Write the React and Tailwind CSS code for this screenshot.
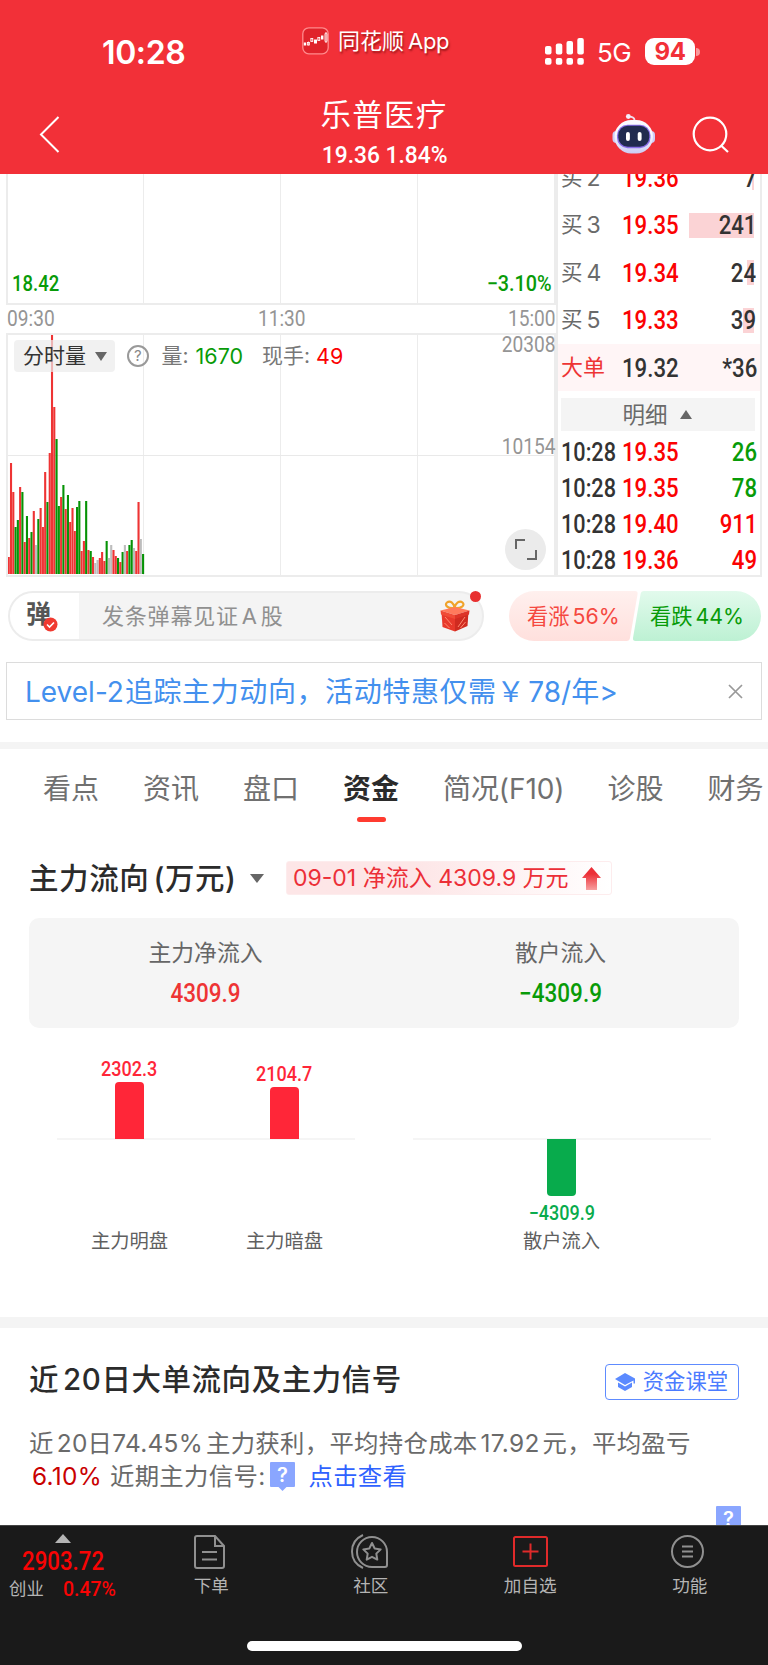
const SANS = "font-['Inter','Noto_Sans_CJK_SC',sans-serif]";
const NUM = "font-['Roboto','Noto_Sans_CJK_SC',sans-serif]";

// [height, direction] for each minute, r = up, g = down, n = flat
const volumes = [
  [17, "r"], [111, "r"], [82, "r"], [47, "g"], [54, "g"], [87, "r"], [82, "g"], [32, "r"], [58, "g"], [36, "r"],
  [42, "g"], [63, "r"], [29, "n"], [55, "g"], [66, "r"], [47, "r"], [102, "r"], [72, "g"], [121, "r"], [239, "r"],
  [167, "r"], [135, "g"], [68, "g"], [77, "r"], [89, "g"], [65, "r"], [79, "g"], [52, "r"], [66, "r"], [43, "r"],
  [67, "g"], [73, "g"], [23, "r"], [33, "r"], [73, "g"], [24, "r"], [23, "g"], [17, "r"], [11, "n"], [14, "n"],
  [16, "r"], [22, "r"], [13, "r"], [33, "g"], [16, "n"], [29, "n"], [24, "r"], [18, "r"], [16, "g"], [12, "r"],
  [22, "g"], [29, "n"], [23, "r"], [29, "g"], [34, "g"], [26, "n"], [23, "r"], [72, "r"], [35, "n"], [20, "g"],
];

const barColors = { r: "#ee3434", g: "#069306", n: "#bdbdbd" };

const bids = [
  { label: "买2", price: "19.36", qty: "7", width: 2 },
  { label: "买3", price: "19.35", qty: "241", width: 65 },
  { label: "买4", price: "19.34", qty: "24", width: 7 },
  { label: "买5", price: "19.33", qty: "39", width: 11 },
];

const ticks = [
  { price: "19.35", qty: "26", up: false },
  { price: "19.35", qty: "78", up: false },
  { price: "19.40", qty: "911", up: true },
  { price: "19.36", qty: "49", up: true },
];

const tabs = ["看点", "资讯", "盘口", "资金", "简况(F10)", "诊股", "财务"];

function StatusBar() {
  return (
    <div className="relative flex h-[76px] items-start justify-between pr-[68px] pl-[102px]">
      <div className="mt-[33px] text-[32px] leading-[39px] font-semibold tracking-[-0.4px]">10:28</div>
      <div className="absolute top-[25px] left-[302px] flex items-center gap-[9px]">
        <svg width="27" height="28" viewBox="0 0 27 28" fill="none">
          <rect x="0.8" y="0.8" width="25.4" height="26" rx="6" fill="#e0232b" stroke="#ff8a8c" strokeWidth="1.3" />
          <path d="M6.500 14.500v4M10 11v4M17 10v4M24 5v11" stroke="#ffb0b0" strokeWidth="1" />
          <rect x="1.800" y="15.500" width="2.400" height="3" fill="#fff" />
          <rect x="5.500" y="15.500" width="2" height="2.500" stroke="#fff" strokeWidth="0.800" />
          <rect x="8.800" y="11.500" width="2" height="3" stroke="#fff" strokeWidth="0.800" />
          <rect x="12" y="12.500" width="3" height="4" fill="#fff" />
          <rect x="15.800" y="10.500" width="2" height="3" stroke="#fff" strokeWidth="0.800" />
          <rect x="19" y="8.500" width="2.400" height="4" fill="#fff" />
          <rect x="23" y="6" width="2" height="9" rx="1" stroke="#fff" strokeWidth="0.900" />
        </svg>
        <span className="text-[22px] leading-8 whitespace-nowrap [text-shadow:1px_2px_2px_rgba(90,0,0,0.55)]">
          同花顺<span className="ml-1 tracking-[-0.3px]">App</span>
        </span>
      </div>
      <div className="mt-[38px] flex items-start">
        <svg width="40" height="27" viewBox="0 0 40 27" fill="#fff">
          <rect x="0" y="8" width="6.500" height="8.500" rx="2" />
          <rect x="10.800" y="5.500" width="6.500" height="11" rx="2" />
          <rect x="21.500" y="3" width="6.500" height="13.500" rx="2" />
          <rect x="32.300" y="0" width="6.500" height="16.500" rx="2" />
          <rect x="0" y="20" width="6.500" height="6.800" rx="2" />
          <rect x="10.800" y="20" width="6.500" height="6.800" rx="2" />
          <rect x="21.500" y="20" width="6.500" height="6.800" rx="2" />
          <rect x="32.300" y="20" width="6.500" height="6.800" rx="2" />
        </svg>
        <span className="ml-3 text-[26px] leading-[30px] tracking-[-0.6px]">5G</span>
        <div className="ml-[14px] flex h-[27px] w-[50px] items-center justify-center rounded-[9px] bg-white text-[24px] font-bold tracking-[-0.5px] text-[#f23038]">
          94
        </div>
        <div className="mt-[10px] ml-px h-2 w-1 rounded-r-full bg-white/50" />
      </div>
    </div>
  );
}

function Robot() {
  return (
    <svg width="44" height="42" viewBox="0 0 44 42" fill="none">
      <defs>
        <linearGradient id="shell" x1="0" y1="0" x2="0" y2="1">
          <stop offset="0.4" stopColor="#fafaff" />
          <stop offset="1" stopColor="#cbccf4" />
        </linearGradient>
      </defs>
      <path d="M23.500 8V6Q23.500 3 18 2.500" stroke="#f0dcec" strokeWidth="1.800" />
      <circle cx="17.300" cy="2.500" r="2.400" fill="#f4eefc" />
      <rect x="1.500" y="17" width="8" height="12" rx="4" fill="#cfcdf8" />
      <rect x="36" y="17" width="8" height="12" rx="4" fill="#cfcdf8" />
      <rect x="3.500" y="6" width="38.500" height="33.500" rx="16.700" fill="url(#shell)" />
      <rect x="6" y="10.700" width="33.500" height="23.500" rx="10.500" fill="#8a6ee8" />
      <rect x="7.300" y="11.700" width="31" height="21" rx="9.500" fill="#212b4f" />
      <rect x="15" y="18" width="3.900" height="9" rx="1.950" fill="#fff" />
      <rect x="26.700" y="18" width="3.900" height="9" rx="1.950" fill="#fff" />
    </svg>
  );
}

function Header() {
  return (
    <header className="h-[174px] bg-[#f23038] text-white">
      <StatusBar />
      <div className="grid h-[98px] grid-cols-3">
        <div className="pt-[40px] pl-[39px]">
          <svg width="21" height="37" viewBox="0 0 21 37" fill="none" stroke="#fff" strokeWidth="2">
            <path d="M19.500 1L2 18.500 19.500 36" />
          </svg>
        </div>
        <div className="flex flex-col items-center pt-[19px]">
          <div className="text-[30.5px] leading-[40px] tracking-[1.3px]">乐普医疗</div>
          <div className={`${NUM} ml-px scale-x-[0.93] pt-px text-[24.5px] leading-[38px] font-medium whitespace-nowrap`}>
            19.36 1.84%
          </div>
        </div>
        <div className="flex items-start justify-end gap-[37px] pt-[38px] pr-[39px]">
          <Robot />
          <svg className="mt-[2px]" width="37" height="38" viewBox="0 0 37 38" fill="none" stroke="#fff" strokeWidth="2.200">
            <circle cx="18" cy="18" r="16.300" />
            <path d="M29 29.500l7 6.500" />
          </svg>
        </div>
      </div>
    </header>
  );
}

function TimeChart() {
  return (
    <div className="relative ml-[6px] w-[550px]">
      <div className={`relative flex h-[131px] items-end justify-between border-x-2 border-b-2 border-[#ececec] pr-[2px] pb-[3px] pl-[4px] text-[21.5px] font-medium text-[#089b08] ${NUM}`}>
        <span className="origin-left scale-x-[0.86]">18.42</span>
        <span className="origin-right scale-x-[0.92]">−3.10%</span>
        <div className="absolute inset-y-0 left-[135px] w-[138px] border-x border-[#ececec]" />
        <div className="absolute inset-y-0 left-[409px] border-l border-[#ececec]" />
      </div>
      <div className={`flex h-[28px] items-center justify-between pl-px text-[21.5px] text-[#959595] ${NUM}`}>
        <span className="origin-left scale-x-[0.89]">09:30</span>
        <span className="scale-x-[0.89]">11:30</span>
        <span className="origin-right scale-x-[0.89]">15:00</span>
      </div>
      <div className="relative h-[244px] border-2 border-[#ececec]">
        <div className="absolute inset-y-0 left-[135px] w-[138px] border-x border-[#ececec]" />
        <div className="absolute inset-y-0 left-[409px] border-l border-[#ececec]" />
        <div className="absolute inset-x-0 top-[120px] border-t border-[#e9e9e9]" />
        <svg className="absolute top-0 left-0" width="137" height="239" viewBox="0 0 137 239">
          {volumes.map(([h, dir], i) => (
            <rect key={i} x={-0.3 + i * 2.277} y={239 - h} width="2.1" height={h} fill={barColors[dir]} />
          ))}
        </svg>
        <div className="relative flex items-center pt-[5px] pl-[6px] text-[21px]">
          <div className="flex h-8 w-[101px] items-center justify-between rounded bg-[#ebebeb]/70 pr-2 pl-[9px] text-[#333]">
            <span className="whitespace-nowrap">分时量</span>
            <svg width="12" height="9" viewBox="0 0 12 9" fill="#666">
              <path d="M0 0h12L6 9z" />
            </svg>
          </div>
          <div className="ml-[12px] flex size-[21.5px] items-center justify-center rounded-full border-2 border-[#999] text-[15px] text-[#888]">
            ?
          </div>
          <span className="ml-[13px] text-[#777]">量:</span>
          <span className="ml-[7px] text-[21.5px] text-[#089b08]">1670</span>
          <span className="ml-[19px] text-[#777]">现手:</span>
          <span className="ml-[6px] text-[21.5px] text-[#fb0202]">49</span>
        </div>
        <div className={`absolute top-[-2px] right-[-1px] origin-right scale-x-[0.89] text-[21.5px] leading-[24px] text-[#959595] ${NUM}`}>20308</div>
        <div className={`absolute top-[100px] right-[-1px] origin-right scale-x-[0.89] text-[21.5px] leading-[24px] text-[#959595] ${NUM}`}>10154</div>
        <div className="absolute right-[8px] bottom-[5px] flex size-[41px] items-center justify-center rounded-full bg-[#ebebeb]">
          <svg width="22" height="21" viewBox="0 0 22 21" fill="none" stroke="#666" strokeWidth="2">
            <path d="M1 10V1h9M21 11v9h-9" />
          </svg>
        </div>
      </div>
    </div>
  );
}

function OrderBook() {
  return (
    <div className={`w-[206px] border-x-2 border-b-2 border-[#ececec] text-[25.5px] font-medium ${NUM}`}>
      <div className="mt-[-20px]">
        {bids.map((b) => (
          <div key={b.label} className="flex h-[47.6px] items-center pr-[6px] pl-[3px]">
            <span className={`flex w-[61px] gap-1 text-[21.5px] font-normal text-[#6a6a6a] ${SANS}`}>
              {b.label[0]}
              <span className="text-[23px]">{b.label[1]}</span>
            </span>
            <span className="origin-left scale-x-[0.87] text-[#fb0202]">{b.price}</span>
            <span className="relative ml-auto flex h-[25px] items-center justify-end text-[#333]">
              <i className="absolute inset-y-0 right-0 bg-[#fbd3d5]" style={{ width: b.width }} />
              <span className="relative left-[2px] origin-right scale-x-[0.87]">{b.qty}</span>
            </span>
          </div>
        ))}
      </div>
      <div className="flex h-[47px] items-center bg-[#fff5f6] px-[3px] text-[#333]">
        <span className={`w-[61px] text-[22px] font-normal text-[#ee3434] ${SANS}`}>大单</span>
        <span className="origin-left scale-x-[0.87]">19.32</span>
        <span className="ml-auto origin-right scale-x-[0.87]">*36</span>
      </div>
      <div className={`mt-[7px] mr-[5px] ml-[3px] flex h-[33px] items-center justify-center gap-[12px] bg-[#f4f4f4] pr-[2px] text-[22.5px] font-normal text-[#6a6a6a] ${SANS}`}>
        明细
        <svg width="12" height="9" viewBox="0 0 12 9" fill="#666">
          <path d="M0 9h12L6 0z" />
        </svg>
      </div>
      <div className="mt-[3px]">
        {ticks.map((t, i) => (
          <div key={i} className="flex h-[35.8px] items-center px-[3px]">
            <span className="w-[61px] origin-left scale-x-[0.85] text-[#333]">10:28</span>
            <span className="origin-left scale-x-[0.87] text-[#fb0202]">{t.price}</span>
            <span className={`ml-auto origin-right scale-x-[0.87] ${t.up ? "text-[#fb0202]" : "text-[#089b08]"}`}>{t.qty}</span>
          </div>
        ))}
      </div>
    </div>
  );
}

function Gift() {
  return (
    <svg width="30" height="32" viewBox="0 0 30 32" fill="none">
      <path d="M14.500 8C8 9 4 5 7 2.500S14 3 14.500 8c1-5 5-8 8-5.500S21 9 14.500 8z" stroke="#f0a32a" strokeWidth="2.200" />
      <path d="M1.500 12l13.500 5v14.500L2.500 27z" fill="#e8392b" />
      <path d="M28.500 12L15 17v14.500L27.500 26z" fill="#d02b20" />
      <path d="M0.500 10.500L15 7l14.500 3.500L15 15z" fill="#ff7a5c" />
      <path d="M0.500 10.500L15 15v4L1 14.500z" fill="#f04b36" />
      <path d="M29.500 10.500L15 15v4l14-4.500z" fill="#dd3427" />
      <path d="M5 17l7 8M4.500 23l5 5M18 27l7-10M20.500 28l5-6" stroke="#ff8a70" strokeWidth="1" />
    </svg>
  );
}

function BarrageRow() {
  return (
    <div className="mt-[14px] flex h-[50px] items-center pr-[7px] pl-2">
      <div className="relative flex h-[50px] w-[476px] items-center rounded-full border-2 border-[#ececec] bg-[#f4f4f4]">
        <div className="flex h-full w-[69px] items-center rounded-l-full bg-white pb-[2px] pl-[16px] text-[25px] font-bold text-[#555]">
          弹
        </div>
        <svg className="absolute top-[24px] left-[33px]" width="15" height="15" viewBox="0 0 15 15" fill="none">
          <circle cx="7.500" cy="7.500" r="7" fill="#f03a30" />
          <path d="M4 7.500l2.500 2.500L11 5.500" stroke="#fff" strokeWidth="1.600" />
        </svg>
        <span className="ml-[23px] pt-px text-[22px] tracking-[0.8px] text-[#909090]">
          发条弹幕见证<span className="mx-[3px]">A</span>股
        </span>
        <div className="mr-[12px] ml-auto">
          <Gift />
        </div>
        <i className="absolute top-[-2px] right-[1px] size-[11px] rounded-full bg-[#e83030]" />
      </div>
      <div className="relative ml-[25px] flex h-[50px] w-[252px] items-center pt-[2px] text-[21.3px]">
        <svg className="absolute inset-0" width="252" height="50" viewBox="0 0 252 50">
          <defs>
            <linearGradient id="up" x1="0" y1="0" x2="0" y2="1">
              <stop offset="0" stopColor="#fff0ee" />
              <stop offset="1" stopColor="#ffe0dd" />
            </linearGradient>
            <linearGradient id="down" x1="0" y1="0" x2="0" y2="1">
              <stop offset="0" stopColor="#e2faec" />
              <stop offset="1" stopColor="#bdf1d3" />
            </linearGradient>
          </defs>
          <path d="M25 0H126q3 0 2.600 3L121 47q-.5 3-3.500 3H25A25 25 0 0 1 25 0z" fill="url(#up)" />
          <path d="M227 0H135q-3 0-3.400 3L124 47q-.4 3 2.600 3H227A25 25 0 0 0 227 0z" fill="url(#down)" />
        </svg>
        <span className="relative ml-[18px] w-[123px] text-[#f5483f]">
          看涨<span className="ml-[3px]">56%</span>
        </span>
        <span className="relative text-[#089b08]">
          看跌<span className="ml-[3px]">44%</span>
        </span>
      </div>
    </div>
  );
}

function Banner() {
  return (
    <div className="mx-[6px] mt-[21px] flex h-[58px] items-center justify-between border border-[#dcdcdc] pr-[18px] pl-[18px] text-[28px] text-[#4390ee]">
      <span className="pt-px whitespace-nowrap">
        Level-2<span className="ml-px tracking-[0.6px]">追踪主力动向，活动特惠仅需￥</span>
        <span className="ml-[3px]">78/年&gt;</span>
      </span>
      <svg width="15" height="15" viewBox="0 0 15 15" stroke="#999" strokeWidth="1.700">
        <path d="M1 1l13 13M14 1L1 14" />
      </svg>
    </div>
  );
}

function Tabs() {
  return (
    <div className="flex h-[82px] gap-[44px] overflow-hidden pl-[43px] text-[28px] text-[#707070]">
      {tabs.map((t) => (
        <div key={t} className={`flex shrink-0 flex-col items-center pt-[19px] ${t === "资金" ? "font-semibold text-[#2b2b2b]" : ""}`}>
          <span className={`leading-[42px] whitespace-nowrap ${t.length > 2 ? "mr-[-1px] tracking-[-0.1px]" : ""}`}>{t}</span>
          {t === "资金" && <i className="mt-[7px] h-[5px] w-[29px] rounded-full bg-[#ff3b30]" />}
        </div>
      ))}
    </div>
  );
}

function FlowBar({ value, label, height, down }) {
  const color = down ? "text-[#08ab4c]" : "text-[#ff2638]";
  return (
    <div className="flex w-[155px] flex-col items-center">
      <div className="flex h-[81px] flex-col items-center justify-end">
        {!down && <span className={`${NUM} scale-x-90 text-[20px] leading-[25px] font-medium ${color}`}>{value}</span>}
        {!down && <i className="w-[29px] shrink-0 rounded-t bg-[#ff2638]" style={{ height }} />}
      </div>
      <div className="flex h-[90px] flex-col items-center">
        {down && <i className="w-[29px] shrink-0 rounded-b bg-[#08ab4c]" style={{ height }} />}
        {down && <span className={`${NUM} mt-1 scale-x-90 text-[20px] leading-[26px] font-medium ${color}`}>{value}</span>}
      </div>
      <span className="text-[19.3px] leading-[24px] text-[#606060]">{label}</span>
    </div>
  );
}

function MainFlow() {
  return (
    <section className="h-[486px] pt-[30px]">
      <div className="flex h-[34px] items-center pl-[29px]">
        <h2 className="w-[207px] text-[29.5px] font-medium tracking-[0.6px] whitespace-nowrap text-[#2b2b2b]">
          主力流向<span className="ml-[4px]">(万元)</span>
        </h2>
        <svg className="ml-[14px]" width="14" height="9" viewBox="0 0 14 9" fill="#666">
          <path d="M0 0h14L7 9z" />
        </svg>
        <div className="ml-[22px] flex h-[34px] w-[326px] items-center justify-between rounded-[3px] border border-[#fdeced] bg-linear-to-r from-[#fde6e7] from-40% to-white pr-[10px] pl-[6px] text-[23px] text-[#ec2f37]">
          <span className="whitespace-nowrap">09-01 净流入 4309.9 万元</span>
          <svg width="19" height="23" viewBox="0 0 19 23">
            <defs>
              <linearGradient id="arrow" x1="0" y1="0" x2="0" y2="1">
                <stop offset="0.3" stopColor="#ec2f37" />
                <stop offset="1" stopColor="#f7a0a0" />
              </linearGradient>
            </defs>
            <path d="M9.500 0L19 11h-4v12H4V11H0z" fill="url(#arrow)" />
          </svg>
        </div>
      </div>
      <div className="mx-[29px] mt-[23px] flex h-[110px] rounded-[10px] bg-[#f5f5f5] text-center">
        <div className="w-[353px] pt-[19px]">
          <div className="text-[22.8px] leading-[32px] text-[#666]">主力净流入</div>
          <div className={`mt-[8px] scale-x-90 text-[25px] leading-[34px] font-medium text-[#ee3434] ${NUM}`}>4309.9</div>
        </div>
        <div className="w-[357px] pt-[19px]">
          <div className="text-[22.8px] leading-[32px] text-[#666]">散户流入</div>
          <div className={`mt-[8px] scale-x-90 text-[25px] leading-[34px] font-medium text-[#089b08] ${NUM}`}>−4309.9</div>
        </div>
      </div>
      <div className="mt-[30px] flex justify-between px-[57px]">
        <div className="relative flex w-[298px]">
          <i className="absolute inset-x-0 top-[80px] h-[2px] bg-[#f5f5f5]" />
          <div className="relative -ml-[5px] flex">
            <FlowBar value="2302.3" label="主力明盘" height={57.5} />
            <FlowBar value="2104.7" label="主力暗盘" height={52.5} />
          </div>
        </div>
        <div className="relative flex w-[298px] justify-center">
          <i className="absolute inset-x-0 top-[80px] h-[2px] bg-[#f5f5f5]" />
          <div className="relative mr-px">
            <FlowBar value="−4309.9" label="散户流入" height={57} down />
          </div>
        </div>
      </div>
    </section>
  );
}

function HelpChip({ className }) {
  return (
    <svg className={className} width="25" height="29" viewBox="0 0 25 29">
      <path d="M1 0h23q1 0 1 1v23q0 1-1 1h-7.500l-4 4-4-4H1q-1 0-1-1V1q0-1 1-1z" fill="#8aa6ff" />
      <text x="12.500" y="20" textAnchor="middle" fontSize="20" fontWeight="600" fill="#fff" fontFamily="Inter">?</text>
    </svg>
  );
}

function Signals() {
  return (
    <section className="h-[197px] overflow-hidden pr-[27px] pl-[29px]">
      <div className="mt-[36px] flex h-[36px] items-start justify-between pr-[2px]">
        <h2 className="text-[29.5px] leading-[31px] font-medium tracking-[0.55px] whitespace-nowrap text-[#2b2b2b]">
          近<span className="ml-[4px]">20日大单流向及主力信号</span>
        </h2>
        <div className="flex h-[36px] w-[134px] items-center justify-between rounded border-[1.5px] border-[#5e8bff] pr-[10px] pl-[9px] text-[21.3px] text-[#4b7bff]">
          <svg width="20" height="18" viewBox="0 0 20 18" fill="#5b8aff">
            <path d="M10 0l10 5.500v5h-1.500V7.500L10 12 0 6z" />
            <path d="M3 9.500l7 4 7-4v4.500L10 18l-7-4z" />
          </svg>
          资金课堂
        </div>
      </div>
      <div className="mt-[27px] text-[24.4px] leading-[32.5px] tracking-[0.3px] text-[#6a6a6a]">
        <p className="whitespace-nowrap">
          近<span className="ml-[3px]">20日74.45%</span>
          <span className="ml-[3px]">主力获利，平均持仓成本</span>
          <span className="mx-[3px]">17.92</span>元，平均盈亏
        </p>
        <p className="flex h-[32px] whitespace-nowrap">
          <span className="ml-[3px] text-[#c90000]">6.10%</span>
          <span className="ml-2">近期主力信号:</span>
          <HelpChip className="mt-[2px] ml-[5px]" />
          <span className="ml-[13px] text-[#2f62ff]">点击查看</span>
        </p>
      </div>
      <HelpChip className="mt-[14px] ml-auto" />
    </section>
  );
}

function NavItem({ label, children }) {
  return (
    <div className="flex w-[159.5px] shrink-0 flex-col items-center pt-[7px]">
      <div className="flex h-[37px] items-center">{children}</div>
      <span className="mt-[4px] text-[17.6px] leading-[24px] text-[#b4b4b4]">{label}</span>
    </div>
  );
}

function BottomNav() {
  return (
    <nav className="flex h-[140px] flex-col justify-between border-t border-[#444] bg-[#1a1a1a] pb-[14px]">
      <div className="flex">
        <div className={`w-[131.5px] shrink-0 pt-[8px] text-[#f80404] ${NUM}`}>
          <svg className="ml-[55px]" width="16" height="9" viewBox="0 0 16 9" fill="#b4b4b4">
            <path d="M8 0l8 9H0z" />
          </svg>
          <div className="ml-[22px] origin-left scale-x-[0.89] pt-px text-[25px] leading-[35px] font-medium">2903.72</div>
          <div className="ml-[9px] flex items-center text-[20.5px] leading-[20px] font-medium">
            <span className={`w-[54px] text-[17.4px] font-normal text-[#b4b4b4] ${SANS}`}>创业</span>
            <span className="origin-left scale-x-[0.95]">0.47%</span>
          </div>
        </div>
        <NavItem label="下单">
          <svg className="mr-[3px]" width="31" height="34" viewBox="0 0 31 34" fill="none" stroke="#909090" strokeWidth="2">
            <path d="M3 1h18l9 10v20q0 2-2 2H3q-2 0-2-2V3q0-2 2-2zM21 1v10h9M8 17h15M8 24.500h15" />
          </svg>
        </NavItem>
        <NavItem label="社区">
          <svg className="mr-[2px]" width="37" height="35" viewBox="0 0 37 35" fill="none" stroke="#909090" strokeWidth="2">
            <path d="M21 3a15 15 0 0 0 0 30h13q2 0 2-2V18A15 15 0 0 0 21 3z" />
            <path d="M12 1Q1 6 1 17.500T12 34" />
            <path d="M21 9l2.700 5.500 6 .9-4.400 4.200 1 6L21 22.800l-5.300 2.800 1-6-4.400-4.200 6-.9z" strokeLinejoin="round" />
          </svg>
        </NavItem>
        <NavItem label="加自选">
          <svg width="35" height="31" viewBox="0 0 35 31" fill="none" stroke="#e02a2a" strokeWidth="2">
            <rect x="1" y="1" width="33" height="29" rx="1.500" />
            <path d="M17.500 7.500v16M9.500 15.500h16" />
          </svg>
        </NavItem>
        <NavItem label="功能">
          <svg className="mr-[5px]" width="33" height="33" viewBox="0 0 33 33" fill="none" stroke="#909090" strokeWidth="2">
            <circle cx="16.500" cy="16.500" r="15.500" />
            <path d="M11 11.500h11M11 16.500h11M11 21.500h11" />
          </svg>
        </NavItem>
      </div>
      <div className="mx-auto h-[10px] w-[275px] rounded-full bg-white" />
    </nav>
  );
}

export default function App() {
  return (
    <div className={`h-[1665px] w-[768px] overflow-hidden bg-white ${SANS}`}>
      <Header />
      <div className="flex h-[403px] overflow-hidden">
        <TimeChart />
        <OrderBook />
      </div>
      <BarrageRow />
      <Banner />
      <div className="mt-[22px] h-[7px] bg-[#f4f4f4]" />
      <Tabs />
      <MainFlow />
      <div className="h-[11px] bg-[#f4f4f4]" />
      <Signals />
      <BottomNav />
    </div>
  );
}
